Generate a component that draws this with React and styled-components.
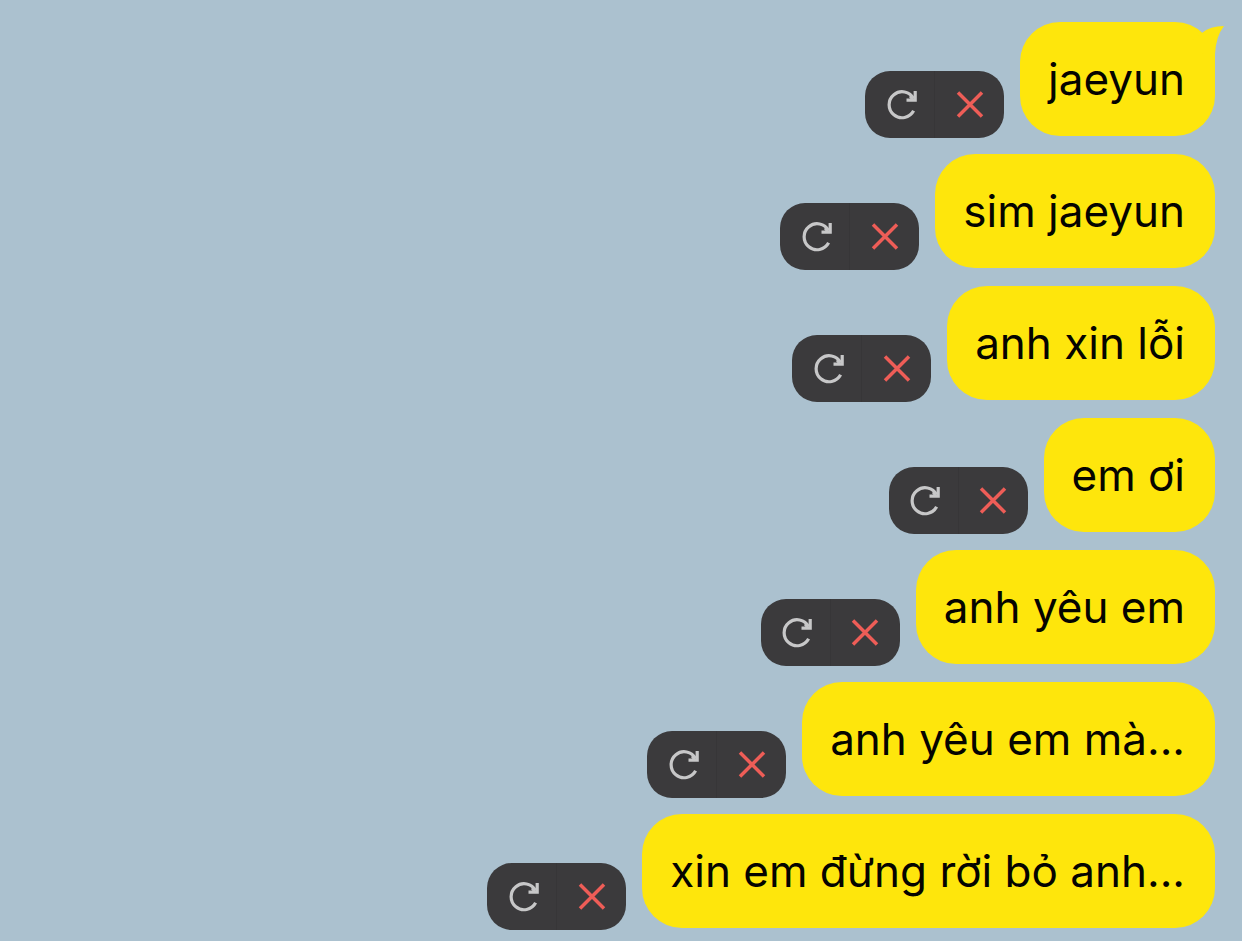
import React from "react";
import styled, { createGlobalStyle } from "styled-components";

const messages = [
  "jaeyun",
  "sim jaeyun",
  "anh xin lỗi",
  "em ơi",
  "anh yêu em",
  "anh yêu em mà...",
  "xin em đừng rời bỏ anh..."
];

const RetryIcon = () => (
  <svg width="36" height="36" viewBox="0 0 36 36" fill="none" aria-hidden="true">
    <path
      d="M31.6 23.8A13 13 0 1 1 31.6 11.6"
      stroke="#c7c7c8"
      strokeWidth="3.2"
    />
    <path d="M33.2 4V13.2H24.5" stroke="#c7c7c8" strokeWidth="3.2" />
    <path d="M28.5 8.5L33.5 13.5H29.5L27 10Z" fill="#c7c7c8" />
  </svg>
);

const DeleteIcon = () => (
  <svg width="36" height="36" viewBox="0 0 36 36" fill="none" aria-hidden="true">
    <path
      d="M6 5.5L30 29.5M30 5.5L6 29.5"
      stroke="#ee5d57"
      strokeWidth="3.5"
    />
  </svg>
);

class App extends React.Component {
  render() {
    return (
      <Chat>
        <GlobalStyle />
        {messages.map((text, index) => (
          <Message key={text}>
            <Actions>
              <Action type="button" aria-label="Retry">
                <RetryIcon />
              </Action>
              <Action type="button" aria-label="Delete" $divided>
                <DeleteIcon />
              </Action>
            </Actions>
            <Bubble>
              {text}
              {index === 0 && (
                <Tail width="40" height="44" viewBox="0 0 40 44" aria-hidden="true">
                  <path d="M17 11Q25 4 39 4Q31 14 30 32V42L4 20Z" fill="#fee60c" />
                </Tail>
              )}
            </Bubble>
          </Message>
        ))}
      </Chat>
    );
  }
}

export default App;

const GlobalStyle = createGlobalStyle`
  body {
    margin: 0;
    background: #abc1cf;
  }
`;

const Chat = styled.main`
  display: flex;
  flex-direction: column;
  gap: 16px;
  padding: 22px 27px 11px;
  font-family: Inter, "Noto Sans", sans-serif;
`;

const Message = styled.div`
  display: flex;
  justify-content: flex-end;
  align-items: flex-end;
  gap: 16px;
`;

const Actions = styled.div`
  display: flex;
  flex: none;
  height: 67px;
  overflow: hidden;
  border-radius: 25px;
  background: #3b3a3c;
`;

const Action = styled.button`
  display: flex;
  align-items: center;
  justify-content: center;
  box-sizing: border-box;
  width: ${props => (props.$divided ? "70px" : "69px")};
  padding: 0;
  border: 0;
  border-left: ${props => (props.$divided ? "1px solid #373638" : "0")};
  background: transparent;
  cursor: pointer;
`;

const Bubble = styled.div`
  position: relative;
  margin-bottom: 2px;
  padding: 30px 30px 30px 28px;
  border-radius: 40px;
  background: #fee60c;
  color: #050400;
  font-size: 44px;
  line-height: 54px;
`;

const Tail = styled.svg`
  position: absolute;
  top: 0;
  right: -10px;
`;
